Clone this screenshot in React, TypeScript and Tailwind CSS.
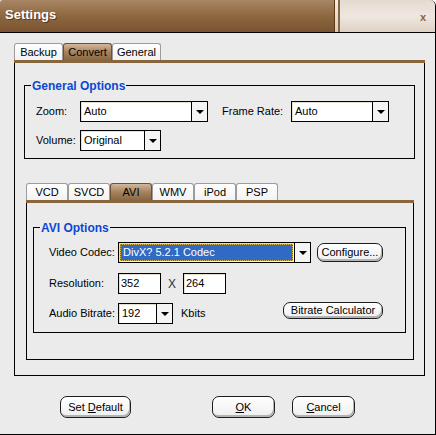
import type { ReactNode } from "react";

const FONT = "font-['Liberation_Sans',Arial,sans-serif]";

function Arrow() {
  return (
    <span className="h-0 w-0 border-x-[4px] border-t-[4px] border-x-transparent border-t-black" />
  );
}

function Combo({
  width,
  value,
  selected = false,
}: {
  width: string;
  value: string;
  selected?: boolean;
}) {
  return (
    <div
      className={`${width} flex h-[21px] shrink-0 border border-black bg-white shadow-[inset_1px_1px_0_#e4dfcf]`}
    >
      <div className="flex min-w-0 flex-1 items-center p-[1px]">
        {selected ? (
          <span className="flex h-full flex-1 items-center border border-dotted border-[#d8b048] bg-[#316ac5] pl-[2px] text-white">
            {value}
          </span>
        ) : (
          <span className="pl-[2px]">{value}</span>
        )}
      </div>
      <div className="flex w-[16px] items-center justify-center border-l border-black bg-[#f4f4f4]">
        <Arrow />
      </div>
    </div>
  );
}

function Field({ value }: { value: string }) {
  return (
    <div className="flex h-[21px] w-[43px] items-center border border-black bg-white pl-[2px] shadow-[inset_1px_1px_0_#e4dfcf]">
      {value}
    </div>
  );
}

function Pill({ width, height, children, className = "" }: { width: string; height: string; children: ReactNode; className?: string }) {
  return (
    <button
      type="button"
      className={`${width} ${height} ${className} flex shrink-0 items-center justify-center rounded-[7px] border border-[#1e1e1e] bg-gradient-to-b from-white to-[#efefef] shadow-[inset_-1px_-2px_0_#b4b4b4]`}
    >
      {children}
    </button>
  );
}

function Tabs({ items, active }: { items: string[]; active: string }) {
  return (
    <div className="flex h-[17px] items-end">
      {items.map((item) => {
        const on = item === active;
        return (
          <div
            key={item}
            className={`flex h-[17px] w-[42px] items-center justify-center rounded-t-[3px] border border-b-0 ${
              on
                ? "border-[#6e5034] bg-gradient-to-b from-[#d2b89c] via-[#a6835f] to-[#8a6744]"
                : "border-[#9c9c9c] bg-gradient-to-b from-white to-[#f2f2f2]"
            }`}
          >
            {item}
          </div>
        );
      })}
    </div>
  );
}

function OuterTabs() {
  const items = ["Backup", "Convert", "General"];
  return (
    <div className="flex h-[17px] items-end">
      {items.map((item) => {
        const on = item === "Convert";
        return (
          <div
            key={item}
            className={`flex h-[17px] w-[49px] items-center justify-center rounded-t-[3px] border border-b-0 ${
              on
                ? "border-[#6e5034] bg-gradient-to-b from-[#d2b89c] via-[#a6835f] to-[#8a6744]"
                : "border-[#9c9c9c] bg-gradient-to-b from-white to-[#f2f2f2]"
            }`}
          >
            {item}
          </div>
        );
      })}
    </div>
  );
}

function Group({
  title,
  className,
  children,
}: {
  title: string;
  className: string;
  children: ReactNode;
}) {
  return (
    <div className={`relative border border-black ${className}`}>
      <span className="absolute -top-[9px] left-[6px] bg-[#ebebeb] px-[1px] text-[12px] font-bold text-[#0b48d4]">
        {title}
      </span>
      {children}
    </div>
  );
}

export default function App() {
  return (
    <div
      className={`${FONT} flex h-[435px] w-[436px] flex-col overflow-hidden rounded-tr-[6px] border-r border-b border-black bg-[#ebebeb] text-[11px] text-black`}
    >
      {/* title bar */}
      <div className="flex h-[33px] shrink-0 border-b border-black">
        <div className="flex flex-1 items-center rounded-tl-[3px] bg-gradient-to-b from-[#a88664] via-[#8d6740] to-[#7a5431] pl-[5px] pb-[2px]">
          <span className="text-[13px] font-bold text-white [text-shadow:1px_1px_0_#5a3a1c]">
            Settings
          </span>
        </div>
        <div className="w-[1px] bg-[#5b3b1b]" />
        <div className="w-[3px] bg-gradient-to-b from-[#f4eee6] to-[#d9cbbb]" />
        <div className="w-[2px] bg-[#8a6540]" />
        <div className="flex w-[95px] items-center justify-end bg-gradient-to-b from-[#e4dad0] via-[#efe8e0] to-[#ddd1c4] pr-[9px] pt-[3px]">
          <span className="text-[11px] font-bold text-[#8a6440]">x</span>
        </div>
      </div>

      {/* body */}
      <div className="flex flex-1 flex-col pl-[14px] pt-[10px]">
        <OuterTabs />
        <div className="h-[3px] w-[411px] bg-[#87653d]" />
        <div className="flex h-[313px] w-[411px] flex-col border-x border-b border-black">
          <Group title="General Options" className="ml-[9px] mt-[22px] h-[74px] w-[391px] pl-[11px] pt-[15px]">
            <div className="flex h-[21px] items-center">
              <span className="w-[44px]">Zoom:</span>
              <Combo width="w-[128px]" value="Auto" />
              <span className="ml-[14px] w-[69px]">Frame Rate:</span>
              <Combo width="w-[98px]" value="Auto" />
            </div>
            <div className="mt-[8px] flex h-[21px] items-center">
              <span className="w-[44px]">Volume:</span>
              <Combo width="w-[81px]" value="Original" />
            </div>
          </Group>

          <div className="ml-[11px] mt-[24px]">
            <Tabs items={["VCD", "SVCD", "AVI", "WMV", "iPod", "PSP"]} active="AVI" />
            <div className="h-[3px] w-[388px] bg-[#87653d]" />
            <div className="flex h-[157px] w-[388px] flex-col border-x border-b border-black">
              <Group title="AVI Options" className="ml-[6px] mt-[24px] h-[106px] w-[373px] pl-[15px] pr-[22px] pt-[14px]">
                <div className="flex h-[21px] items-center">
                  <span className="w-[69px]">Video Codec:</span>
                  <Combo width="w-[193px]" value="DivX? 5.2.1 Codec" selected />
                  <Pill width="w-[66px]" height="h-[19px]" className="ml-[6px]">
                    Configure...
                  </Pill>
                </div>
                <div className="mt-[10px] flex h-[21px] items-center">
                  <span className="w-[69px]">Resolution:</span>
                  <Field value="352" />
                  <span className="w-[22px] text-center text-[12px] font-light text-[#333]">X</span>
                  <Field value="264" />
                </div>
                <div className="mt-[9px] flex h-[21px] items-center">
                  <span className="w-[69px]">Audio Bitrate:</span>
                  <Combo width="w-[55px]" value="192" />
                  <span className="ml-[8px]">Kbits</span>
                  <Pill width="w-[100px]" height="h-[17px]" className="mb-[6px] ml-auto">
                    Bitrate Calculator
                  </Pill>
                </div>
              </Group>
            </div>
          </div>
        </div>

        <div className="ml-[46px] mt-[20px] flex items-center">
          <Pill width="w-[71px]" height="h-[22px]">
            <span>
              Set <span className="underline">D</span>efault
            </span>
          </Pill>
          <Pill width="w-[63px]" height="h-[22px]" className="ml-[81px]">
            <span>
              <span className="underline">O</span>K
            </span>
          </Pill>
          <Pill width="w-[63px]" height="h-[22px]" className="ml-[17px]">
            <span>
              <span className="underline">C</span>ancel
            </span>
          </Pill>
        </div>
      </div>
    </div>
  );
}
